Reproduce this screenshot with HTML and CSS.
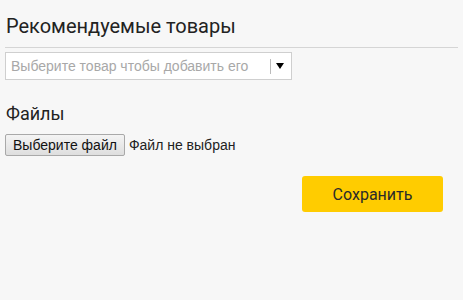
FILE: index.html
```html
<!DOCTYPE html>
<html lang="ru">
<head>
<meta charset="utf-8">
<link rel="stylesheet" href="styles.css">
</head>
<body>
<div class="page">
  <h2 class="title">Рекомендуемые товары</h2>
  <div class="rule"></div>
  <div class="select">
    <span class="placeholder">Выберите товар чтобы добавить его</span>
    <span class="sep"></span>
    <span class="arrow"></span>
  </div>
  <h3 class="subtitle">Файлы</h3>
  <div class="file">
    <span class="file-btn">Выберите файл</span>
    <span class="file-name">Файл не выбран</span>
  </div>
  <div class="actions">
    <button class="save">Сохранить</button>
  </div>
</div>
</body>
</html>
```
FILE: styles.css
```css
html, body {
  margin: 0;
  padding: 0;
  background: #f7f7f7;
}
.page {
  padding: 0 5px;
}
.title {
  margin: 0;
  padding: 13px 0 0 1px;
  font-family: Roboto, sans-serif;
  font-weight: 400;
  font-size: 20px;
  line-height: 26px;
  color: #222;
}
.rule {
  margin-top: 8px;
  height: 1px;
  background: #d5d5d5;
}
.select {
  margin-top: 4px;
  width: 285px;
  height: 26px;
  border: 1px solid #cfcfcf;
  background: #fff;
  display: flex;
  align-items: center;
}
.placeholder {
  flex: 1;
  padding-left: 5px;
  font-family: "Liberation Sans", Arial, sans-serif;
  font-size: 14px;
  color: #a8a8a8;
}
.sep {
  width: 1px;
  height: 15px;
  background: #bbb;
}
.arrow {
  width: 0;
  height: 0;
  margin: 0 7px 0 5px;
  border-left: 4px solid transparent;
  border-right: 4px solid transparent;
  border-top: 6px solid #000;
}
.subtitle {
  margin: 0;
  padding: 22px 0 0 1px;
  font-family: Roboto, sans-serif;
  font-weight: 400;
  font-size: 18px;
  line-height: 24px;
  color: #222;
}
.file {
  margin-top: 8px;
  display: flex;
  align-items: center;
  gap: 4px;
}
.file-btn {
  box-sizing: border-box;
  height: 22px;
  padding: 0 7px;
  border: 1px solid #a9a9a9;
  border-radius: 2px;
  background: linear-gradient(#f4f4f4, #dedede);
  font-family: "Liberation Sans", Arial, sans-serif;
  font-size: 14px;
  line-height: 20px;
  color: #111;
}
.file-name {
  font-family: "Liberation Sans", Arial, sans-serif;
  font-size: 14px;
  color: #222;
}
.actions {
  display: flex;
  justify-content: flex-end;
  padding-right: 15px;
  margin-top: 20px;
}
.save {
  width: 141px;
  height: 36px;
  border: 0;
  border-radius: 3px;
  background: #ffcc00;
  font-family: Roboto, sans-serif;
  font-size: 16px;
  color: #2a2a2a;
  padding: 0;
}
```
